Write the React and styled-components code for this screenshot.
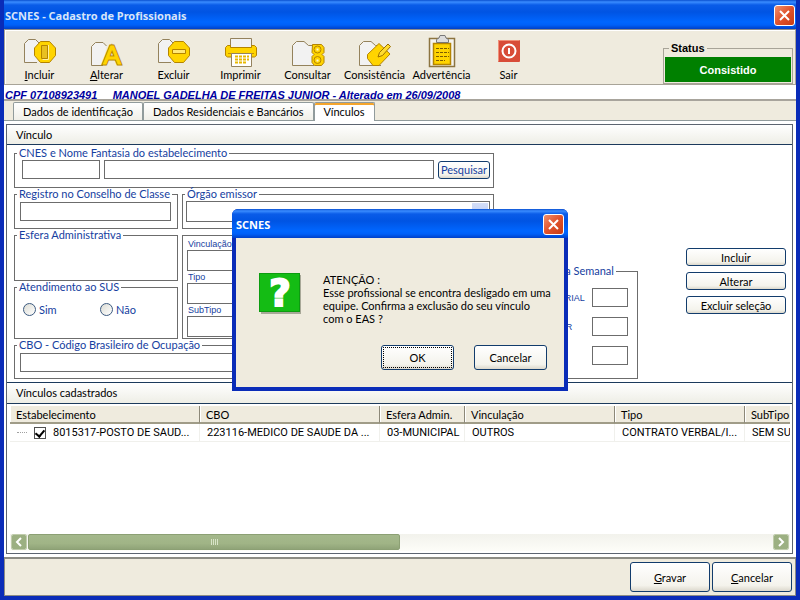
import React from "react";
import styled, { createGlobalStyle } from "styled-components";

const GlobalStyle = createGlobalStyle`
  * {
    box-sizing: border-box;
  }

  body {
    margin: 0;
    background: #0a2cb8;
  }

  body, button, input, select {
    font-family: Lato, "Liberation Sans", sans-serif;
    font-size: 11px;
    color: #000;
  }
`;

const Window = styled.div`
  min-height: 100vh;
  display: flex;
  flex-direction: column;
  padding: 0 4px 4px;
  background: #0a2cb8;
`;

const TitleBar = styled.div`
  height: 29px;
  display: flex;
  align-items: center;
  justify-content: space-between;
  padding: ${(props) => (props.$small ? "2px 4px 0" : "2px 1px 0")};
  margin: ${(props) => (props.$small ? "0 -4px" : "0")};
  color: ${(props) => (props.$small ? "#fff" : "#d8e4f8")};
  background: linear-gradient(#0a50d0 0, #3a8cff 2px, #0a5ce8 5px, #0054e3 12px, #0066ff 22px, #0060f8 25px, #0040c8 100%);

  h1, h2 {
    margin: 0;
    font-family: "Noto Sans", sans-serif;
    font-size: 11px;
    line-height: 13px;
    font-weight: bold;
  }
`;

const CloseButton = styled.button`
  width: 21px;
  height: 21px;
  padding: 0;
  display: flex;
  align-items: center;
  justify-content: center;
  border: 1px solid #fff;
  border-radius: 3px;
  background: linear-gradient(135deg, #f0906c, #e0522c 50%, #c83c14);
`;

const Toolbar = styled.div`
  display: flex;
  height: 56px;
  padding: 4px 0 0 1px;
  background: #efebde;
  border: 1px solid #a8a498;
  border-top-color: #8c8c8c;
  box-shadow: inset 1px 1px 0 #fff;
`;

const ToolButton = styled.button`
  width: 67px;
  padding: 2px 0 0;
  display: flex;
  flex-direction: column;
  align-items: center;
  border: none;
  background: none;
  line-height: 13px;

  svg {
    overflow: visible;
  }
`;

const StatusBox = styled.fieldset`
  width: 130px;
  height: 42px;
  margin: 8px 2px 0 auto;
  padding: 2px 1px 0;
  border: 1px solid #a8a498;

  legend {
    margin-left: 4px;
    padding: 0 2px;
    line-height: 13px;
    font-family: "Liberation Sans", sans-serif;
    font-weight: bold;
  }
`;

const StatusValue = styled.output`
  display: flex;
  align-items: center;
  justify-content: center;
  height: 25px;
  background: #008000;
  color: #fff;
  font-family: "Liberation Sans", sans-serif;
  font-weight: bold;
`;

const InfoStrip = styled.div`
  height: 16px;
  padding-left: 1px;
  line-height: 20px;
  white-space: pre;
  background: #fff;
  border-bottom: 2px solid #a8a49c;
  color: #0000a0;
  font-family: "Liberation Sans", sans-serif;
  font-weight: bold;
  font-style: italic;
`;

const TabBar = styled.div`
  display: flex;
  height: 20px;
  padding: 1px 0 0 9px;
  background: #efebde;
  border-bottom: 1px solid #919b9c;
`;

const Tab = styled.button`
  height: ${(props) => (props.$active ? "19px" : "18px")};
  padding: 0 9px;
  border: 1px solid #919b9c;
  border-bottom: none;
  border-radius: 2px 2px 0 0;
  background: ${(props) => (props.$active ? "#fff" : "linear-gradient(#fff, #f0efe8)")};
  box-shadow: ${(props) => (props.$active ? "inset 0 2px 0 #f5a52c" : "none")};
  line-height: 16px;
  white-space: nowrap;
`;

const TabPanel = styled.div`
  flex: 1;
  display: flex;
  flex-direction: column;
  padding: 3px 3px 3px 2px;
  background: #fff;
`;

const Frame = styled.div`
  flex: 1;
  display: flex;
  flex-direction: column;
  border: 1px solid #5c6470;
`;

const SectionTitle = styled.h3`
  height: ${(props) => (props.$ruled ? "22px" : "20px")};
  margin: 0;
  padding-left: 9px;
  line-height: 20px;
  font-size: 11px;
  font-weight: normal;
  background: linear-gradient(#fff, #eeeee6);
  border-bottom: 1px solid #1c3a5c;
  border-top: ${(props) => (props.$ruled ? "1px solid #1c3a5c" : "none")};
`;

const FormArea = styled.form`
  display: grid;
  grid-template-columns: minmax(0, 480px) 140px 1fr;
  column-gap: 4px;
  padding: 2px 6px 3px 7px;
`;

const Fields = styled.div`
  display: grid;
  grid-template-columns: 164px 1fr;
  grid-template-rows: 41px 41px 52px 58px 40px;
  column-gap: 4px;
`;

const Group = styled.fieldset`
  min-width: 0;
  margin: 0;
  padding: ${(props) => props.$padding || "2px 6px 0 5px"};
  border: 1px solid #6c6c6c;
  grid-column: ${(props) => (props.$wide ? "1 / -1" : "auto")};

  legend {
    margin-left: ${(props) => props.$legendOffset || "-3px"};
    padding: 0 2px;
    line-height: 12px;
    color: #1540a0;
    white-space: nowrap;
  }
`;

const LinkGroup = styled.div`
  grid-row: 3 / 5;
  grid-column: 2;
  margin-top: 6px;
  padding: 3px 4px 0;
  border: 1px solid #6c6c6c;
`;

const FieldRow = styled.div`
  display: grid;
  grid-template-columns: 78px 1fr 52px;
  align-items: center;
  column-gap: 4px;
`;

const TextBox = styled.input`
  width: ${(props) => props.$width || "100%"};
  min-width: 0;
  height: 19px;
  display: block;
  padding: 0 3px;
  border: 1px solid #6c6c6c;
  background: #fff;
`;

const DropDown = styled.select`
  width: 100%;
  height: 21px;
  display: block;
  appearance: none;
  border: 1px solid #6c6c6c;
  border-radius: 0;
  background: linear-gradient(#d4def8, #b4c8f4) right 1px top 1px / 16px 17px no-repeat #fff;
`;

const SmallLabel = styled.label`
  display: block;
  padding-left: 1px;
  margin-bottom: 1px;
  color: #1540a0;
  font-family: "Liberation Sans", sans-serif;
  font-size: 9px;
  line-height: 11px;

  ${DropDown} {
    margin-left: -1px;
  }
`;

const RadioRow = styled.div`
  display: grid;
  grid-template-columns: 77px 1fr;
  padding: 8px 0 0 3px;

  label {
    display: flex;
    align-items: center;
    gap: 3px;
    color: #1540a0;
  }

  input {
    appearance: none;
    width: 13px;
    height: 13px;
    margin: 0;
    border: 1px solid #3c5a80;
    border-radius: 50%;
    background: linear-gradient(135deg, #dcdcd4, #fff);
  }
`;

const PushButton = styled.button`
  width: ${(props) => props.$width};
  height: ${(props) => props.$height || "18px"};
  padding: 0;
  flex: none;
  border: 1px solid #123c6c;
  border-radius: 3px;
  background: linear-gradient(#fff, #f4f3ec 80%, #dcd8cc);
  color: ${(props) => (props.$blue ? "#1540a0" : "#000")};
  outline: ${(props) => (props.$focused ? "1px dotted #000" : "none")};
  outline-offset: -3px;
`;

const HoursGroup = styled(Group)`
  margin-top: 118px;
`;

const HoursRow = styled.label`
  display: flex;
  align-items: center;
  justify-content: space-between;
  margin-bottom: 10px;
  color: #1540a0;
  font-family: "Liberation Sans", sans-serif;
  font-size: 9px;
`;

const Actions = styled.div`
  display: flex;
  flex-direction: column;
  align-items: flex-end;
  gap: 6px;
  padding-top: 101px;
`;

const ListArea = styled.div`
  flex: 1;
  display: flex;
  flex-direction: column;
  padding: 2px 2px 2px 3px;
`;

const TableClip = styled.div`
  flex: 1;
  width: 0;
  min-width: 100%;
  overflow: hidden;
`;

const Table = styled.table`
  width: 880px;
  table-layout: fixed;
  border-collapse: separate;
  border-spacing: 0;

  th, td {
    height: 18px;
    overflow: hidden;
    white-space: nowrap;
    text-align: left;
    font-weight: normal;
  }

  th {
    padding: 1px 0 0 6px;
    background: #efebde;
    border-right: 1px solid #8c8878;
    border-bottom: 2px solid #a09c88;
    box-shadow: inset 1px 0 0 #fff;
  }

  td {
    padding: 0 0 0 7px;
    font-family: Roboto, sans-serif;
    border-right: 1px solid #f0f0ec;
    border-bottom: 1px solid #f0f0ec;
  }
`;

const TreeCell = styled.label`
  display: flex;
  align-items: center;

  &::before {
    content: "";
    width: 10px;
    margin-right: 7px;
    border-top: 1px dotted #a0a0a0;
  }

  input {
    appearance: none;
    display: flex;
    justify-content: center;
    width: 12px;
    height: 12px;
    margin: 0 7px 0 0;
    border: 1px solid #505050;
    background: #fff;
  }

  input:checked::before {
    content: "";
    width: 4px;
    height: 7px;
    border: solid #000;
    border-width: 0 2px 2px 0;
    transform: rotate(40deg);
  }
`;

const ScrollBar = styled.div`
  display: flex;
  height: 17px;
  padding: 0 1px;
  background: linear-gradient(#f2f2ec, #fdfdf8);
`;

const ScrollArrow = styled.button`
  width: 16px;
  height: 16px;
  padding: 0;
  display: flex;
  align-items: center;
  justify-content: center;
  border: 1px solid #fff;
  border-radius: 2px;
  outline: 1px solid #c0ccac;
  outline-offset: -1px;
  background: #9cb082;
`;

const ScrollTrack = styled.div`
  flex: 1;
  padding: 0 1px;
`;

const ScrollThumb = styled.div`
  width: 50%;
  height: 16px;
  display: flex;
  align-items: center;
  justify-content: center;
  gap: 1px;
  border: 1px solid #8ca074;
  border-radius: 2px;
  background: linear-gradient(#a4b88c, #a0b486 60%, #90a478);

  span {
    width: 1px;
    height: 6px;
    background: #d8e4c8;
  }
`;

const Footer = styled.div`
  display: flex;
  justify-content: flex-end;
  gap: 2px;
  padding: 3px;
  background: #efebde;
  border: 1px solid #8c8c84;
  border-top: 2px solid #8c8c84;
`;

const Overlay = styled.div`
  position: fixed;
  inset: 0;
  display: flex;
  align-items: center;
  justify-content: center;
`;

const Dialog = styled.div`
  width: 336px;
  padding: 0 4px 4px;
  border-radius: 6px 6px 0 0;
  overflow: hidden;
  background: #0a2cb8;
`;

const DialogBody = styled.div`
  padding: 35px 17px 17px 23px;
  background: #efebde;
`;

const DialogMessage = styled.div`
  display: flex;
  gap: 22px;

  svg {
    flex: none;
  }

  p {
    margin: 0;
    line-height: 13px;
    white-space: pre;
  }
`;

const DialogButtons = styled.div`
  display: flex;
  justify-content: flex-end;
  gap: 20px;
  margin-top: 20px;
`;

const GOLD = "#ffd400";
const DARK_GOLD = "#b48400";

const Folder = () => (
  <path d="M24 29.500H2.500V9.500L6.500 5.500H14L18.500 9.500H24" fill="#f2f2f2" stroke="#94825c" />
);

const HalfFolder = () => (
  <path d="M15 26.500H2.500V7.500L6.500 3.500H13.500L17.500 7.500" fill="#f2f2f2" stroke="#94825c" />
);

const Octagon = () => (
  <path d="M18.500 5.500H27.500L33.500 12V19.500L27.500 26.500H18.500L12.500 19.500V12z" fill={GOLD} stroke={DARK_GOLD} />
);

const icons = {
  incluir: (
    <>
      <HalfFolder />
      <Octagon />
      <path d="M19.500 9.500h6v13h-6z" fill="#e8c020" stroke={DARK_GOLD} />
      <path d="M20.500 23.500H26.500V9" fill="none" stroke="#fff0a0" />
    </>
  ),
  alterar: (
    <>
      <path d="M14 29.500H2.500V10.500L6.500 6.500H14L17.500 10" fill="#f2f2f2" stroke="#94825c" />
      <text x="23" y="28" textAnchor="middle" fontFamily="Liberation Sans, sans-serif" fontSize="26" fill={DARK_GOLD} stroke={DARK_GOLD} strokeWidth="3">A</text>
      <text x="23" y="28" textAnchor="middle" fontFamily="Liberation Sans, sans-serif" fontSize="26" fill={GOLD} stroke={GOLD} strokeWidth="1">A</text>
    </>
  ),
  excluir: (
    <>
      <HalfFolder />
      <Octagon />
      <path d="M16.500 13.500h13v4h-13z" fill="#ffe878" stroke={DARK_GOLD} />
    </>
  ),
  imprimir: (
    <>
      <path d="M7.500 2.500h21v9h-21z" fill="#f2f2f2" stroke="#94825c" />
      <path d="M4.500 9.500h3v2h21v-2h3l2 2v8l-2 1.500h-27l-2-1.500v-8z" fill={GOLD} stroke={DARK_GOLD} />
      <path d="M5 17.500h26" stroke="#c89400" />
      <path d="M8.500 17.500h20v13h-20z" fill="#fff" stroke="#94825c" />
      <path d="M12 20.500h14M12 23.500h14M12 26.500h12" stroke="#e8b800" strokeWidth="2" strokeDasharray="3 1" />
    </>
  ),
  consultar: (
    <>
      <Folder />
      <path d="M22.500 8.500h9l2.500 3v5l-2 2l2 2v6l-2.500 3h-7l-2.500-3v-6l2-2l-2-2z" fill={GOLD} stroke={DARK_GOLD} />
      <circle cx="27.500" cy="13.500" r="3.500" fill={GOLD} stroke={DARK_GOLD} />
      <circle cx="27.500" cy="24" r="3.500" fill={GOLD} stroke={DARK_GOLD} />
      <path d="M26.500 13.500h2M26.500 24.500h2" stroke="#fff8d0" strokeWidth="2" />
    </>
  ),
  consistencia: (
    <>
      <Folder />
      <path d="M22 7.500L33 18L22 29.500H16L10.500 22.500V18.500z" fill={GOLD} stroke={DARK_GOLD} />
      <path d="M21 21L22.500 16.500L31 8L33.500 10.500L25.500 19.500z" fill="#ffdc30" stroke="#9c7000" />
    </>
  ),
  advertencia: (
    <>
      <path d="M5.500 2.500h25v28h-25z" fill="#f6f4ee" stroke="#8c7440" strokeWidth="1.500" />
      <path d="M9.500 7.500h17v21h-17z" fill={GOLD} stroke={DARK_GOLD} strokeWidth="1.500" />
      <path d="M12 12.500h13M12 16.500h13M12 20.500h13M12 24.500h9" stroke="#7c5c00" strokeDasharray="3 1" />
      <path d="M12.500 6.500v-3l2.500-1.500l1-2.500h5l1 2.500l2.500 1.500v3z" fill="#dcdcdc" stroke="#787878" />
    </>
  ),
  sair: (
    <>
      <rect x="7" y="4" width="22" height="22" rx="1" fill="#d84c38" />
      <path d="M7.500 25V4.500H28" fill="none" stroke="#f09078" />
      <circle cx="18" cy="15" r="6.500" fill="none" stroke="#fff" strokeWidth="2" />
      <path d="M18 12v6" stroke="#fff" strokeWidth="2" />
    </>
  ),
};

const tools = [
  { icon: "incluir", key: "I", label: "ncluir" },
  { icon: "alterar", key: "A", label: "lterar" },
  { icon: "excluir", label: "Excluir" },
  { icon: "imprimir", label: "Imprimir" },
  { icon: "consultar", label: "Consultar" },
  { icon: "consistencia", label: "Consistência" },
  { icon: "advertencia", label: "Advertência" },
  { icon: "sair", label: "Sair" },
];

const columns = [
  { title: "Estabelecimento", width: 190 },
  { title: "CBO", width: 180 },
  { title: "Esfera Admin.", width: 85 },
  { title: "Vinculação", width: 150 },
  { title: "Tipo", width: 130 },
  { title: "SubTipo", width: 145 },
];

function Close() {
  return (
    <CloseButton type="button" aria-label="Fechar">
      <svg width="13" height="13" viewBox="0 0 13 13">
        <path d="M2 2L11 11M11 2L2 11" stroke="#fff" strokeWidth="2" />
      </svg>
    </CloseButton>
  );
}

function Arrow({ label, d }) {
  return (
    <ScrollArrow type="button" aria-label={label}>
      <svg width="10" height="10" viewBox="0 0 10 10">
        <path d={d} fill="none" stroke="#fff" strokeWidth="2" />
      </svg>
    </ScrollArrow>
  );
}

function LinkField({ label }) {
  return (
    <SmallLabel>
      {label}
      <DropDown />
    </SmallLabel>
  );
}

function VinculoForm() {
  return (
    <FormArea onSubmit={(e) => e.preventDefault()}>
      <Fields>
        <Group $wide $padding="1px 3px 0 7px" $legendOffset="-5px">
          <legend>CNES e Nome Fantasia do estabelecimento</legend>
          <FieldRow>
            <TextBox aria-label="CNES" />
            <TextBox aria-label="Nome Fantasia" />
            <PushButton type="button" $width="52px" $blue>Pesquisar</PushButton>
          </FieldRow>
        </Group>
        <Group>
          <legend>Registro no Conselho de Classe</legend>
          <TextBox aria-label="Registro no Conselho de Classe" />
        </Group>
        <Group $padding="1px 3px 0" $legendOffset="-1px">
          <legend>Órgão emissor</legend>
          <DropDown aria-label="Órgão emissor" />
        </Group>
        <Group>
          <legend>Esfera Administrativa</legend>
        </Group>
        <LinkGroup>
          <LinkField label="Vinculação" />
          <LinkField label="Tipo" />
          <LinkField label="SubTipo" />
        </LinkGroup>
        <Group>
          <legend>Atendimento ao SUS</legend>
          <RadioRow>
            <label><input type="radio" name="sus" />Sim</label>
            <label><input type="radio" name="sus" />Não</label>
          </RadioRow>
        </Group>
        <Group $wide>
          <legend>CBO - Código Brasileiro de Ocupação</legend>
          <TextBox aria-label="CBO" />
        </Group>
      </Fields>
      <HoursGroup $padding="11px 9px 0 17px" $legendOffset="-14px">
        <legend>Carga Horária Semanal</legend>
        {["AMBULATORIAL", "HOSPITALAR", "OUTROS"].map((name) => (
          <HoursRow key={name}>
            {name}
            <TextBox $width="36px" />
          </HoursRow>
        ))}
      </HoursGroup>
      <Actions>
        <PushButton type="button" $width="100px">Incluir</PushButton>
        <PushButton type="button" $width="100px">Alterar</PushButton>
        <PushButton type="button" $width="100px">Excluir seleção</PushButton>
      </Actions>
    </FormArea>
  );
}

function VinculoList() {
  return (
    <ListArea>
      <TableClip>
        <Table>
          <colgroup>
            {columns.map((col) => <col key={col.title} width={col.width} />)}
          </colgroup>
          <thead>
            <tr>
              {columns.map((col) => <th key={col.title}>{col.title}</th>)}
            </tr>
          </thead>
          <tbody>
            <tr>
              <td>
                <TreeCell>
                  <input type="checkbox" defaultChecked />
                  8015317-POSTO DE SAUD...
                </TreeCell>
              </td>
              <td>223116-MEDICO DE SAUDE DA ...</td>
              <td>03-MUNICIPAL</td>
              <td>OUTROS</td>
              <td>CONTRATO VERBAL/I...</td>
              <td>SEM SUBTIPO</td>
            </tr>
          </tbody>
        </Table>
      </TableClip>
      <ScrollBar>
        <Arrow label="Rolar para a esquerda" d="M7 1L3 5L7 9" />
        <ScrollTrack>
          <ScrollThumb><span /><span /><span /><span /></ScrollThumb>
        </ScrollTrack>
        <Arrow label="Rolar para a direita" d="M3 1L7 5L3 9" />
      </ScrollBar>
    </ListArea>
  );
}

function ConfirmDialog() {
  return (
    <Overlay>
      <Dialog role="dialog" aria-label="SCNES">
        <TitleBar $small>
          <h2>SCNES</h2>
          <Close />
        </TitleBar>
        <DialogBody>
          <DialogMessage>
            <svg width="42" height="41" viewBox="0 0 42 41">
              <rect x="2" y="2" width="40" height="39" fill="#a8a898" />
              <rect width="41" height="39" fill="#0c9c10" />
              <rect x="1" y="1" width="39" height="37" fill="#14bc14" />
              <text x="21" y="33" textAnchor="middle" fontFamily="DejaVu Sans, sans-serif" fontWeight="bold" fontSize="37" fill="#fff" stroke="#fff" strokeWidth="2">?</text>
            </svg>
            <p>
              {"ATENÇÃO :\nEsse profissional se encontra desligado em uma\nequipe. Confirma a exclusão do seu vínculo\ncom o EAS ?"}
            </p>
          </DialogMessage>
          <DialogButtons>
            <PushButton type="button" $width="73px" $height="25px" $focused>OK</PushButton>
            <PushButton type="button" $width="73px" $height="25px">Cancelar</PushButton>
          </DialogButtons>
        </DialogBody>
      </Dialog>
    </Overlay>
  );
}

function App() {
  return (
    <>
      <GlobalStyle />
      <Window>
        <TitleBar>
          <h1>SCNES - Cadastro de Profissionais</h1>
          <Close />
        </TitleBar>
        <Toolbar>
          {tools.map((tool) => (
            <ToolButton key={tool.icon} type="button">
              <svg width="36" height="32" viewBox="0 0 36 32">{icons[tool.icon]}</svg>
              <span>{tool.key && <u>{tool.key}</u>}{tool.label}</span>
            </ToolButton>
          ))}
          <StatusBox>
            <legend>Status</legend>
            <StatusValue>Consistido</StatusValue>
          </StatusBox>
        </Toolbar>
        <InfoStrip>{"CPF 07108923491     MANOEL GADELHA DE FREITAS JUNIOR - Alterado em 26/09/2008"}</InfoStrip>
        <TabBar>
          <Tab type="button">Dados de identificação</Tab>
          <Tab type="button">Dados Residenciais e Bancários</Tab>
          <Tab type="button" $active>Vínculos</Tab>
        </TabBar>
        <TabPanel>
          <Frame>
            <SectionTitle>Vínculo</SectionTitle>
            <VinculoForm />
            <SectionTitle $ruled>Vínculos cadastrados</SectionTitle>
            <VinculoList />
          </Frame>
        </TabPanel>
        <Footer>
          <PushButton type="button" $width="80px" $height="30px"><u>G</u>ravar</PushButton>
          <PushButton type="button" $width="80px" $height="30px"><u>C</u>ancelar</PushButton>
        </Footer>
      </Window>
      <ConfirmDialog />
    </>
  );
}

export default App;
